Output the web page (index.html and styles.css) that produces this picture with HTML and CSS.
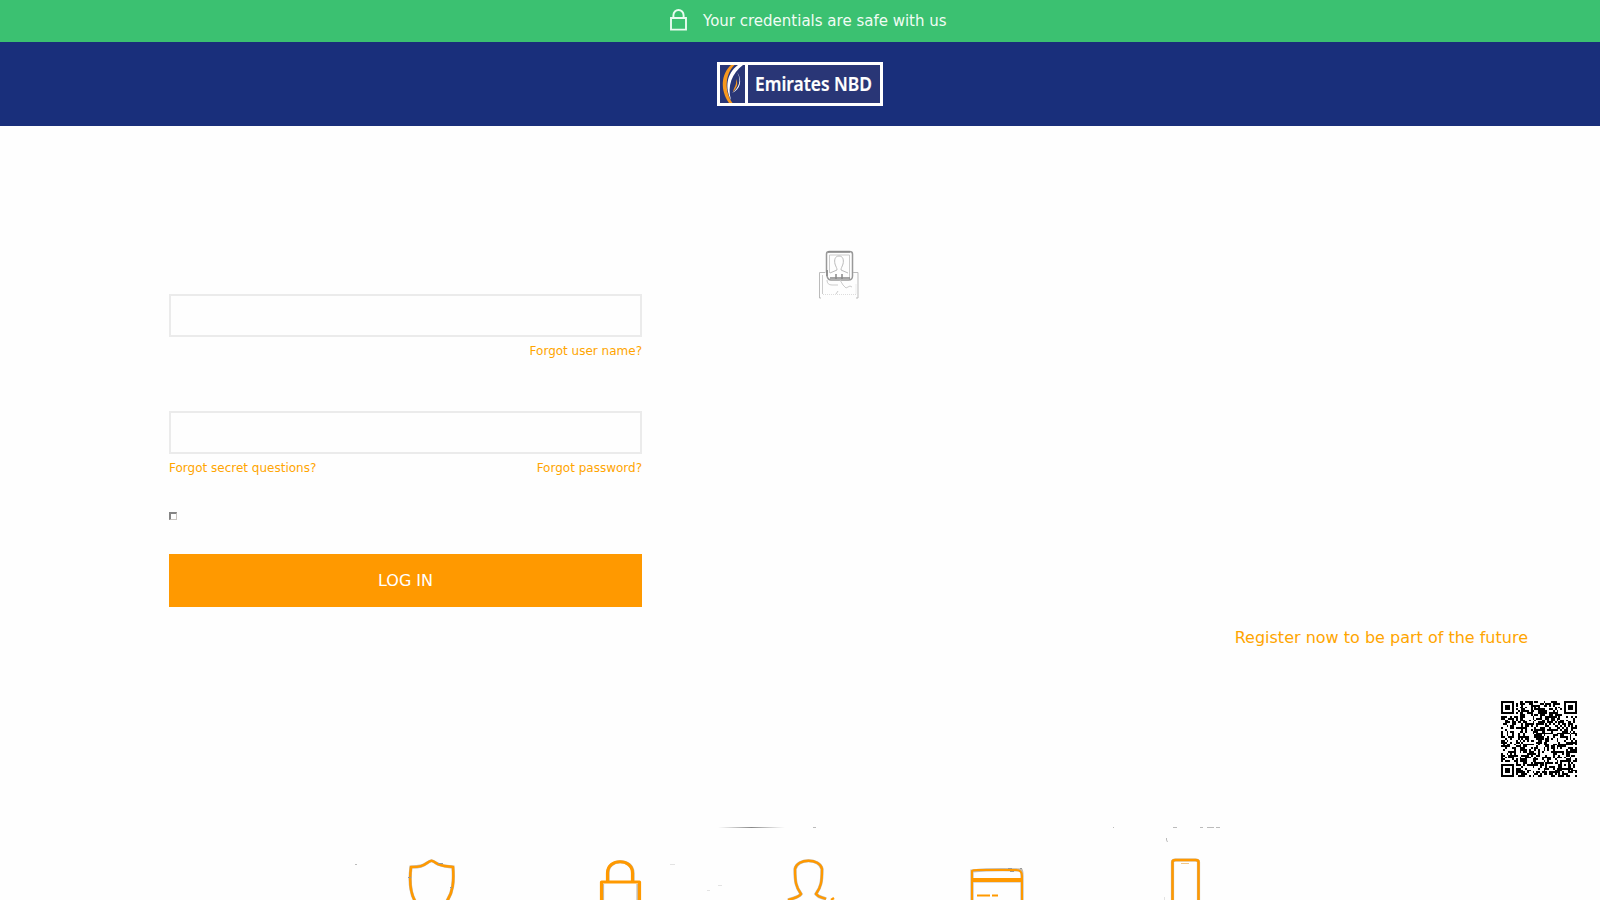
FILE: index.html
```html
<!DOCTYPE html>
<html lang="en">
<head>
<meta charset="utf-8">
<title>Log in</title>
<link rel="stylesheet" href="styles.css">
</head>
<body>
<div class="page">
  <div class="notice">
    <svg class="notice-lock" width="17" height="22" viewBox="0 0 17 22" fill="none" stroke="#e9fbf0" stroke-width="1.900"><path d="M1 9h15v11.600H1zM3.400 9V6.200a5.100 5.200 0 0 1 10.200 0V9"/></svg>
    <span class="notice-text">Your credentials are safe with us</span>
  </div>
  <header class="brand">
    <svg class="logo" width="166" height="44" viewBox="0 0 166 44">
      <path fill="#fff" d="M0 0h166v44H0z"/>
      <path fill="#293676" d="M3 3h25v38H3zM31 3h132v38H31z"/>
      <path fill="#f7981d" d="M14 3C4 12 3 28 12 41h3.500C7 29 8 12 17.500 3z"/>
      <path fill="#fff" d="M21 3C9 12 8 26 14 38c-4-14 1-27 12-35zM20 10c5 8 2 16-5 21 8-3 11-13 5-21z"/>
      <path fill="#f7981d" d="M19 17c3 6 0 9-3 13 1-5 4-7 3-13z"/>
      <text class="logo-text" x="38" y="28.500" textLength="117" lengthAdjust="spacingAndGlyphs">Emirates NBD</text>
    </svg>
  </header>
  <main class="content">
    <section class="login">
      <div class="field"></div>
      <div class="links links-end"><span>Forgot user name?</span></div>
      <div class="field field-second"></div>
      <div class="links"><span>Forgot secret questions?</span><span>Forgot password?</span></div>
      <div class="check"></div>
      <div class="button">LOG IN</div>
    </section>
    <section class="promo">
      <svg class="portrait" width="42" height="50" viewBox="0 0 42 50" fill="none">
        <g stroke="#999"><path stroke-width="1.500" d="M8.500 23V4q0-2.500 3-2.500h20q3 0 3 2.500v22q0 4-4 4H13q-3 0-4-4v-6"/><path stroke="#ccc" d="M11.500 23V5h20v24"/></g>
        <path stroke="#888" stroke-width="1.500" d="M10 2h22M12 28h20M9 20v6M18 24v5M24 24v5"/>
        <path stroke="#bbb" d="M21 6c-4 0-5 4-4 8 1 3 2 4 2 6l-7 3M21 6c4 0 5 4 4 8-1 3-2 4-2 6l7 3"/>
        <path stroke="#bbb" d="M7 22.500H1.500V48H3M35 22.500h5V48h-2"/>
        <path stroke="#ccc" d="M4.500 25v19"/><path stroke="#ddd" stroke-dasharray="1 1" d="M5 44.500H38V34"/>
        <path stroke="#ccc" d="M9 30q0 5 5 5h6M22 30l3 5 3 3 4-2 2 1M20 41l-2 3"/>
      </svg>
      <div class="register">Register now to be part of the future</div>
      <svg class="qr" width="76" height="76" viewBox="0 0 41 41" shape-rendering="crispEdges"><path id="modules" fill="#000"/></svg>
    </section>
  </main>
  <footer class="features">
    <svg class="feature-art" width="1600" height="74" viewBox="0 826 1600 74" fill="none">
      <defs><linearGradient id="fade"><stop stop-color="#999" stop-opacity="0"/><stop offset=".5" stop-color="#888"/><stop offset="1" stop-color="#999" stop-opacity="0"/></linearGradient></defs>
      <path fill="url(#fade)" d="M718 827h67v1h-67z"/>
      <path stroke="#bbb" d="M813 827.500h3M1113 827.500h1M1173 827.500h4M1200 827.500h3M1207 827.500h7M1216 827.500h4M355 864.500h2M1166.500 838v2l1 2"/>
      <path stroke="#e3e3e3" d="M670 864.500h5M718 885.500h4M707 890.500h3M1164.500 897v3"/>
      <g class="icon-shadow">
        <path d="M415 901c-5-9-6-19-4-34 9 0 12-1 16-4 4-3 5-3 9 0 4 3 9 3 17 4 1 15 0 25-6 34"/>
        <path d="M608 881V873c0-15 25-15 25 0v8M602.500 901V884M638 884v17"/>
        <path d="M788 900c5-2 10-2 13-6-5-7-6-12-6-25 2-11 25-11 27 0 0 13-1 18-6 25 3 4 6 3 10 5"/>
        <path d="M972 901V871q20-2 49-1 1 1 1 6v25M971 881h51"/>
        <path d="M1172.500 901V862q0-2 3-2h20q3 0 3 2v39"/>
      </g>
      <g stroke="#f90" stroke-width="2.500" stroke-linejoin="round">
        <path d="M415 901c-5-9-6-19-4-34 9 0 12-1 16-4 4-3 5-3 9 0 4 3 9 3 17 4 1 15 0 25-6 34"/>
        <path stroke-width="3.200" d="M607.500 881V873c0-15 25-15 25 0v8M601.500 901V882h38v19"/>
        <path stroke-width="2.300" d="M788 900c5-2 10-2 13-6-5-7-6-12-6-25 2-11 25-11 27 0 0 13-1 18-6 25 3 4 6 3 10 5M831 900l3-2"/>
        <path stroke-width="2" d="M972 901V871q1-1 6-1h38q6 0 6 6v25"/><path stroke-width="4" d="M972 880h50"/><path stroke-width="2" d="M977 895.500h13M992 895.500h6"/>
        <path stroke-width="2.500" d="M1172.500 901V862q0-2 3-2h20q3 0 3 2v39"/>
      </g>
      <path stroke="#f3c785" d="M1181 863.500h8"/>
      <path stroke="#999" d="M408 877.500h3M450 887.500h2M438 863.500h5M1008 868.500h4M1010 871.500h4M1020 868.500h2"/>
    </svg>
  </footer>
</div>
<script src="pattern.js"></script>
</body>
</html>
```
FILE: styles.css
```css
* { box-sizing: border-box; }
body { margin: 0; background: #fefefe; font-family: "DejaVu Sans", sans-serif; }
.page { width: 1600px; height: 900px; overflow: hidden; display: flex; flex-direction: column; }
.notice { height: 42px; flex: none; display: flex; align-items: center; padding: 0 0 3px 670px; gap: 16px; background: #3bc171; color: #f0fcf4; font-size: 15px; line-height: 20px; }
.notice-lock { flex: none; }
.notice-text { padding-top: 2px; white-space: nowrap; }
.brand { height: 84px; flex: none; display: flex; align-items: center; justify-content: center; background: #192f7b; }
.logo { display: block; overflow: visible; }
.logo-text { font: 600 19.5px "Noto Sans", "Open Sans", sans-serif; fill: #fff; stroke: #fff; stroke-width: .2px; }
.content { height: 700px; flex: none; display: grid; grid-template-columns: 473px 1fr; padding: 124px 23px 0 169px; column-gap: 176px; }
.login { display: flex; flex-direction: column; padding-top: 44px; }
.field { height: 43px; flex: none; border: 2px solid #ebebeb; background: #fefefe; }
.field-second { margin-top: 54px; }
.links { display: flex; justify-content: space-between; height: 20px; padding-top: 4px; color: #ffa500; font-size: 12px; line-height: 20px; }
.links-end { justify-content: flex-end; }
.check { width: 8px; height: 8px; margin-top: 38px; border: 2px solid; border-width: 2px 1px 1px 2px; border-color: #858585 #c8c4c0 #c8c4c0 #858585; background: #fff; }
.button { height: 53px; margin-top: 34px; background: #f90; color: #fff; font-size: 16px; line-height: 53px; text-align: center; }
.promo { display: flex; flex-direction: column; }
.portrait { display: block; flex: none; }
.register { margin: 327px 49px 0 0; color: #ffa500; font-size: 16px; line-height: 22px; text-align: right; }
.qr { display: block; flex: none; align-self: flex-end; margin-top: 52px; }
.features { height: 74px; flex: none; }
.feature-art { display: block; }
.icon-shadow { stroke: #8c7b60; stroke-width: 3.200px; opacity: .5; }
```
FILE: pattern.js
```js
// Decorative module pattern with three corner squares and one alignment square.
const size = 41;
let seed = 71;
let d = "";
function ring(x, y, cx, cy, r) {
  const k = Math.max(Math.abs(x - cx), Math.abs(y - cy));
  if (k > r) return null;
  return r === 4 ? k < 2 || k === 3 : k === 0 || k === 2;
}
for (let y = 0; y < size; y++) {
  for (let x = 0; x < size; x++) {
    seed = (seed * 1103515245 + 12345) % 2147483648;
    let on = (seed / 2147483648) > 0.5;
    for (const [cx, cy, r] of [[3, 3, 4], [37, 3, 4], [3, 37, 4], [34, 34, 2]]) {
      const v = ring(x, y, cx, cy, r);
      if (v !== null) on = v;
    }
    if (on) d += "M" + x + " " + y + "h1v1h-1z";
  }
}
document.getElementById("modules").setAttribute("d", d);
```
